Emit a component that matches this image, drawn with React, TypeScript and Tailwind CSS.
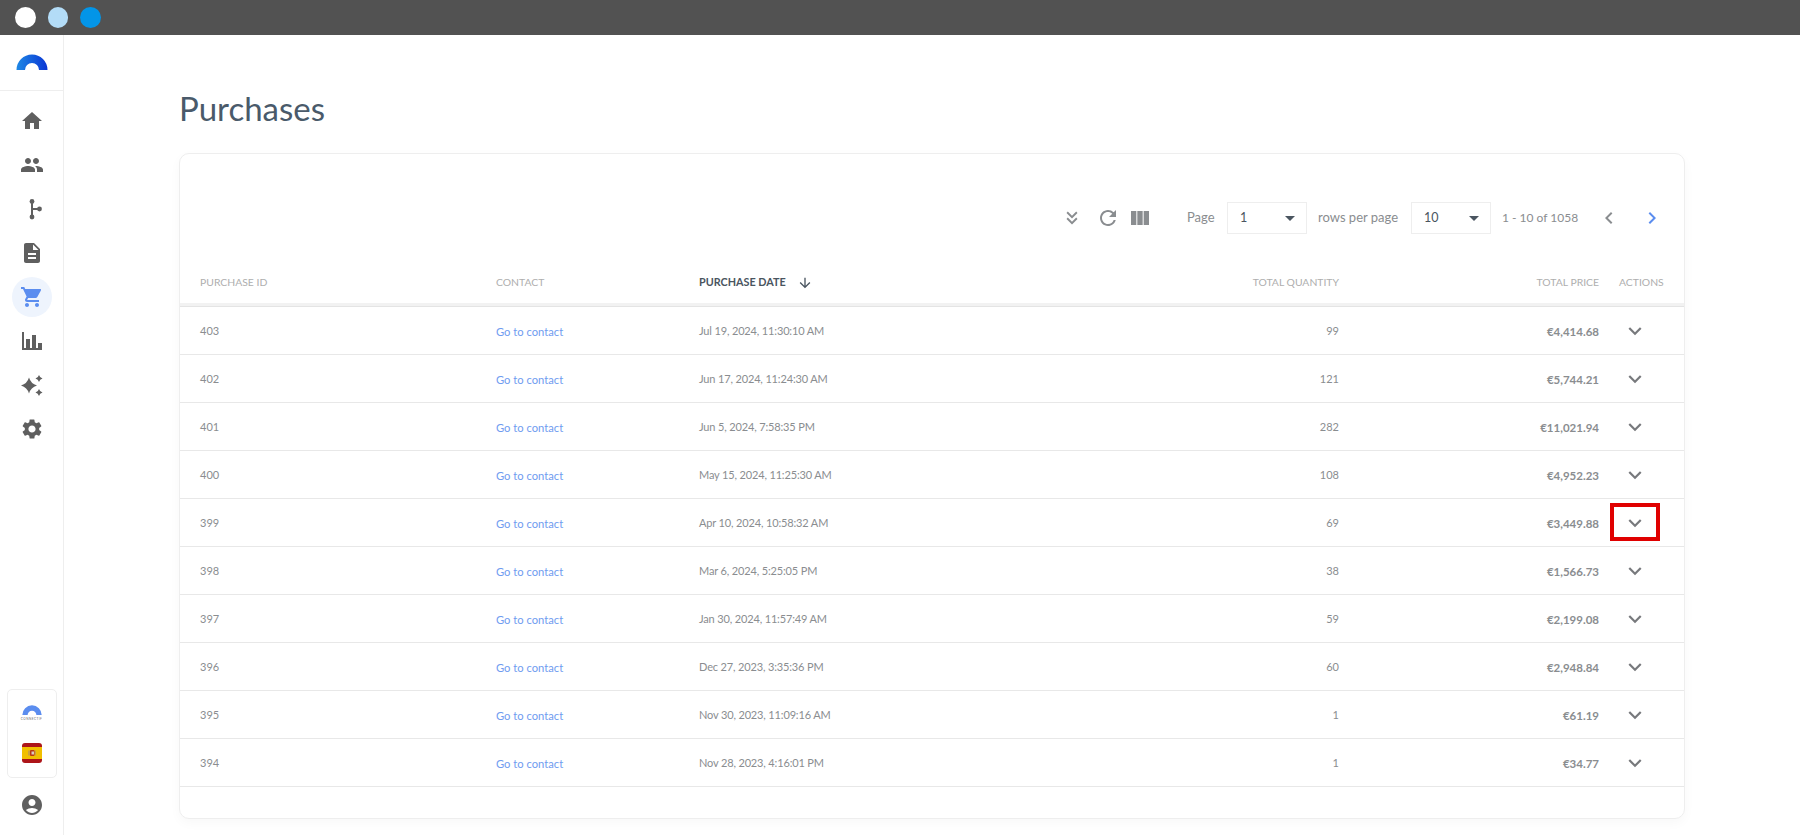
import React from 'react';
import {
  MdHome, MdPeople, MdDescription, MdShoppingCart, MdSettings, MdAccountCircle,
  MdKeyboardDoubleArrowDown, MdRefresh, MdViewColumn, MdArrowDropDown, MdChevronLeft, MdChevronRight,
  MdExpandMore, MdArrowDownward,
} from 'react-icons/md';

const rows = [
  { id: 403, date: 'Jul 19, 2024, 11:30:10 AM', qty: 99, price: '€4,414.68' },
  { id: 402, date: 'Jun 17, 2024, 11:24:30 AM', qty: 121, price: '€5,744.21' },
  { id: 401, date: 'Jun 5, 2024, 7:58:35 PM', qty: 282, price: '€11,021.94' },
  { id: 400, date: 'May 15, 2024, 11:25:30 AM', qty: 108, price: '€4,952.23' },
  { id: 399, date: 'Apr 10, 2024, 10:58:32 AM', qty: 69, price: '€3,449.88' },
  { id: 398, date: 'Mar 6, 2024, 5:25:05 PM', qty: 38, price: '€1,566.73' },
  { id: 397, date: 'Jan 30, 2024, 11:57:49 AM', qty: 59, price: '€2,199.08' },
  { id: 396, date: 'Dec 27, 2023, 3:35:36 PM', qty: 60, price: '€2,948.84' },
  { id: 395, date: 'Nov 30, 2023, 11:09:16 AM', qty: 1, price: '€61.19' },
  { id: 394, date: 'Nov 28, 2023, 4:16:01 PM', qty: 1, price: '€34.77' },
];

const Logo: React.FC<{ small?: boolean }> = ({ small }) => (
  <svg width={small ? 20 : 32} height={small ? 10 : 16} viewBox="0 0 32 16">
    <defs>
      <linearGradient id="arc" x1="0" x2="1" y1="0" y2="0">
        <stop offset="0" stopColor="#1e88e5" />
        <stop offset="1" stopColor="#0a36d4" />
      </linearGradient>
    </defs>
    <path d="M0.5 16A15.5 15.5 0 0 1 31.5 16H23A7 7 0 0 0 9 16Z" fill={small ? '#5b8def' : 'url(#arc)'} />
  </svg>
);

const BranchIcon = () => (
  <svg width="24" height="24" viewBox="0 0 24 24" fill="currentColor">
    <circle cx="12" cy="4.5" r="2.4" />
    <circle cx="12" cy="20" r="2.4" />
    <circle cx="19.5" cy="12" r="2.4" />
    <path d="M11 4.5h2V11h6v2h-6v7h-2Z" />
  </svg>
);

const ChartIcon = () => (
  <svg width="24" height="24" viewBox="0 0 24 24" fill="currentColor">
    <path d="M2 3h2v16h18v2H2Z" />
    <path d="M6 10h4v9H6ZM12 6h4v13h-4ZM18 14h4v5h-4Z" />
  </svg>
);

const SparkleIcon = () => (
  <svg width="24" height="24" viewBox="0 0 24 24" fill="currentColor">
    <path d="M9 4.5Q10.8 10.7 17 12.5Q10.8 14.3 9 20.5Q7.2 14.3 1 12.5Q7.2 10.7 9 4.5Z" />
    <path d="M19 2Q19.8 4.7 22.5 5.5Q19.8 6.3 19 9Q18.2 6.3 15.5 5.5Q18.2 4.7 19 2Z" />
    <path d="M19 16Q19.8 18.7 22.5 19.5Q19.8 20.3 19 23Q18.2 20.3 15.5 19.5Q18.2 18.7 19 16Z" />
  </svg>
);

const Flag = () => (
  <svg width="20" height="20" viewBox="0 0 20 20">
    <rect width="20" height="20" rx="3" fill="#ad1519" />
    <rect y="4" width="20" height="12" fill="#f1bf00" />
    <rect x="6" y="7.5" width="2" height="5" fill="#c9a040" />
    <rect x="12.5" y="7.5" width="1.5" height="5" fill="#c9a040" />
    <rect x="8" y="7" width="4.5" height="6" rx="1" fill="#ad1519" opacity="0.8" />
    <rect x="9.5" y="8.5" width="2.5" height="3" fill="#d8c8c0" />
  </svg>
);

const navItems = [
  <MdHome size={24} />,
  <MdPeople size={24} />,
  <BranchIcon />,
  <MdDescription size={24} />,
  <MdShoppingCart size={24} />,
  <ChartIcon />,
  <SparkleIcon />,
  <MdSettings size={24} />,
];

const Sidebar = () => (
  <aside className="w-[64px] shrink-0 border-r border-[#eeeeee] flex flex-col text-[#5f5f5f]">
    <div className="h-[56px] border-b border-[#eeeeee] flex items-center justify-center pb-[2px]">
      <Logo />
    </div>
    <nav className="pt-[8px] flex flex-col items-center">
      {navItems.map((icon, i) => (
        <div key={i} className="h-[44px] flex items-center justify-center">
          <div className={i === 4 ? 'w-[40px] h-[40px] rounded-full bg-[#eef4fd] text-[#5b8def] flex items-center justify-center' : 'w-[40px] h-[40px] flex items-center justify-center'}>
            {icon}
          </div>
        </div>
      ))}
    </nav>
    <div className="mt-auto flex flex-col items-center pb-[18px]">
      <div className="w-[50px] h-[89px] border border-[#eeeeee] rounded-[5px] flex flex-col items-center pt-[15px]">
        <Logo small />
        <span className="text-[3px] leading-[4px] tracking-[0.5px] text-[#666] mt-[2px]">CONNECTIF</span>
        <div className="mt-[22px]"><Flag /></div>
      </div>
      <div className="mt-[15px]"><MdAccountCircle size={24} /></div>
    </div>
  </aside>
);

const PageSelect: React.FC<{ value: string }> = ({ value }) => (
  <div className="w-[80px] h-[32px] border border-[#eeeeee] flex items-center justify-between pl-[12px] pr-[4px] text-[12.5px] text-[#4a5560]">
    {value}
    <MdArrowDropDown size={24} className="text-[#4a5560]" />
  </div>
);

const Toolbar = () => (
  <div className="h-[32px] mt-[48px] flex items-center text-[13px] text-[#8a8d90]">
    <div className="ml-[880px] w-[24px] flex justify-center"><MdKeyboardDoubleArrowDown size={22} /></div>
    <div className="ml-[12px] w-[24px] flex justify-center"><MdRefresh size={24} /></div>
    <div className="ml-[8px] w-[24px] flex justify-center"><MdViewColumn size={24} /></div>
    <span className="ml-[35px] w-[40px]">Page</span>
    <PageSelect value="1" />
    <span className="ml-[11px] w-[93px]">rows per page</span>
    <PageSelect value="10" />
    <span className="ml-[11px] w-[88px] text-[12px]">1 - 10 of 1058</span>
    <div className="ml-[7px] w-[24px] flex justify-center"><MdChevronLeft size={24} /></div>
    <div className="ml-[19px] w-[24px] flex justify-center text-[#5b8def]"><MdChevronRight size={24} /></div>
  </div>
);

const gridCols = 'grid grid-cols-[296px_203px_400px_240px_260px_84px] pl-[20px] items-center';

const TableHead = () => (
  <div className={`${gridCols} h-[69px] pt-[28px] text-[10.4px] text-[#aeaeae]`}>
    <span>PURCHASE ID</span>
    <span className="pt-[1px]">CONTACT</span>
    <span className="flex items-center font-bold text-[#4a5560] text-[10.8px]">
      PURCHASE DATE
      <MdArrowDownward size={16} className="ml-[11px]" />
    </span>
    <span className="text-right">TOTAL QUANTITY</span>
    <span className="text-right">TOTAL PRICE</span>
    <span className="pl-[20px] pt-[1px]">ACTIONS</span>
  </div>
);

const Row: React.FC<{ row: (typeof rows)[number] }> = ({ row }) => (
  <div className={`${gridCols} h-[48px] border-b border-[#e8e8e8] text-[11px] text-[#8a8d90]`}>
    <span className="pt-[2px]">{row.id}</span>
    <a className="text-[#6f9cf0] text-[11.2px] pt-[3px]">Go to contact</a>
    <span className="tracking-[-0.15px] pt-[2px]">{row.date}</span>
    <span className="text-right pt-[2px]">{row.qty}</span>
    <span className="text-right font-bold text-[11.5px] pt-[2px]">{row.price}</span>
    <div className="ml-[20px] w-[32px] relative flex justify-center">
      <MdExpandMore size={26} className="text-[#77797c]" />
      {row.id === 399 && <div className="absolute left-[-9px] top-[-7px] w-[50px] h-[38px] border-4 border-[#e00000]" />}
    </div>
  </div>
);

export default function App() {
  return (
    <div className="w-[1800px] h-[835px] overflow-hidden bg-white flex flex-col font-['Lato','Open_Sans',sans-serif]">
      <div className="h-[35px] shrink-0 bg-[#525252] flex items-center pl-[15px] gap-[12px]">
        <span className="w-[20.5px] h-[20.5px] rounded-full bg-white" />
        <span className="w-[20.5px] h-[20.5px] rounded-full bg-[#b3dcf7]" />
        <span className="w-[20.5px] h-[20.5px] rounded-full bg-[#0395e8]" />
      </div>
      <div className="flex flex-1 min-h-0">
        <Sidebar />
        <main className="flex-1 px-[115px]">
          <h1 className="mt-[51px] h-[67px] text-[33px] leading-[44px] text-[#4a5a6a] font-normal">Purchases</h1>
          <div className="h-[666px] border border-[#eeeeee] rounded-[10px] shadow-[0_4px_12px_rgba(0,0,0,0.03)]">
            <Toolbar />
            <TableHead />
            <div className="h-[4px] bg-[#f2f2f2] border-b border-[#e4e4e4]" />
            {rows.map(row => <Row key={row.id} row={row} />)}
          </div>
        </main>
      </div>
    </div>
  );
}
